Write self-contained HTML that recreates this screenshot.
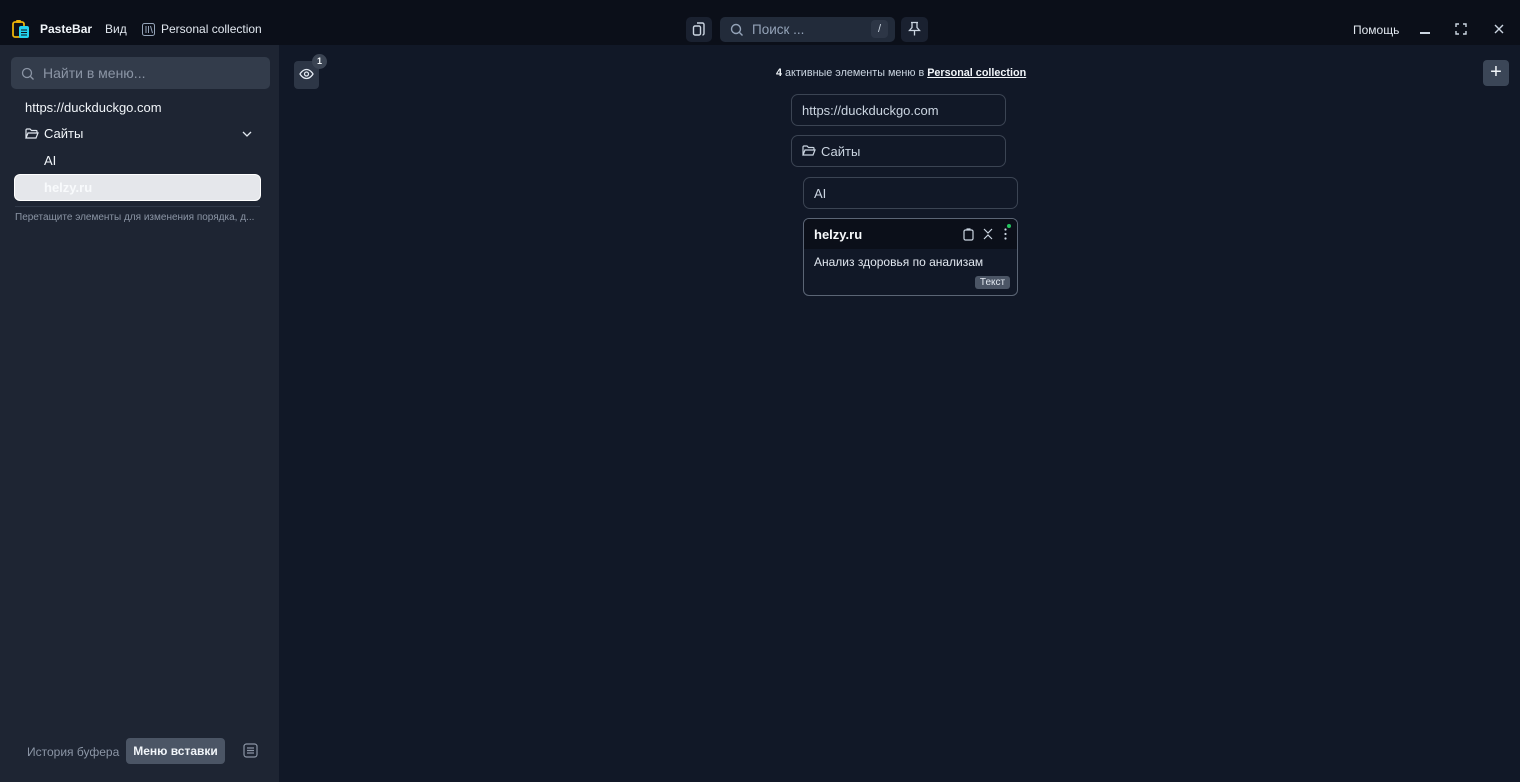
<!DOCTYPE html>
<html><head><meta charset="utf-8"><style>
*{box-sizing:border-box;margin:0;padding:0}
body{width:1520px;height:782px;background:#111827;font-family:"Liberation Sans","Noto Sans CJK SC",sans-serif;color:#e5e7eb;position:relative;overflow:hidden;font-size:13px}
.a{position:absolute}
.top{left:0;top:0;width:1520px;height:45px;background:#0b0f19}
.side{left:0;top:45px;width:279px;height:737px;background:#1e2533}
.box{border:1.5px solid #3b4453;border-radius:7px;background:#111827;color:#cbd5e1;font-size:13px;padding-left:10px;display:flex;align-items:center}
svg{display:block}
</style></head><body>
<div class="a top"></div>
<div class="a side"></div>
<svg class="a" style="left:12px;top:19px" width="18" height="20" viewBox="0 0 18 20"><rect x="1" y="3" width="11" height="15" rx="2" fill="none" stroke="#eab308" stroke-width="1.8"/><rect x="4" y="1" width="5" height="3" rx="1" fill="#eab308"/><rect x="7" y="7" width="10" height="12" rx="2" fill="#22d3ee"/><path d="M9 11h6M9 13.5h6M9 16h6" stroke="#0b0f19" stroke-width="1"/></svg>
<div class="a" style="left:40px;top:22px;font-weight:bold;font-size:12px;color:#f1f5f9">PasteBar</div>
<div class="a" style="left:105px;top:22px;font-size:12px;color:#e2e8f0">Вид</div>
<svg class="a" style="left:142px;top:23px" width="13" height="13"><rect x="0.5" y="0.5" width="12" height="12" rx="2" fill="none" stroke="#94a3b8"/><path d="M4 3v7M6.5 3v7M8.5 3l2 7" stroke="#94a3b8"/></svg>
<div class="a" style="left:161px;top:22px;font-size:12px;color:#e2e8f0">Personal collection</div>
<div class="a" style="left:686px;top:17px;width:26px;height:25px;background:#1a2130;border-radius:5px"></div>
<svg class="a" style="left:692px;top:21px" width="14" height="16"><rect x="1.5" y="5" width="7" height="9" rx="1.5" fill="none" stroke="#cbd5e1" stroke-width="1.4"/><path d="M5 2h5.5a1.5 1.5 0 0 1 1.5 1.5v9a1.5 1.5 0 0 1-1.5 1.5" fill="none" stroke="#cbd5e1" stroke-width="1.4"/></svg>
<div class="a" style="left:720px;top:17px;width:175px;height:25px;background:#222b3a;border-radius:5px"></div>
<svg class="a" style="left:730px;top:23px" width="14" height="14"><circle cx="6" cy="6" r="4.5" fill="none" stroke="#94a3b8" stroke-width="1.4"/><path d="M9.5 9.5l3 3" stroke="#94a3b8" stroke-width="1.4"/></svg>
<div class="a" style="left:752px;top:22px;font-size:13.5px;color:#94a3b8">Поиск ...</div>
<div class="a" style="left:871px;top:20px;width:17px;height:18px;background:#2d3646;border-radius:4px;color:#cbd5e1;font-size:11px;text-align:center;line-height:18px">/</div>
<div class="a" style="left:901px;top:17px;width:27px;height:25px;background:#1a2130;border-radius:5px"></div>
<svg class="a" style="left:908px;top:21px" width="13" height="16"><path d="M3 1.5h7M4 1.5v5L1.5 9.5h10L9 6.5v-5M6.5 9.5v5" fill="none" stroke="#cbd5e1" stroke-width="1.3"/></svg>
<div class="a" style="left:1353px;top:23px;font-size:12px;color:#e2e8f0">Помощь</div>
<div class="a" style="left:1420px;top:32px;width:10px;height:1.5px;background:#cbd5e1"></div>
<svg class="a" style="left:1455px;top:23px" width="12" height="12" fill="none" stroke="#cbd5e1" stroke-width="1.4"><path d="M1 4V1h3M8 1h3v3M11 8v3H8M4 11H1V8"/></svg>
<svg class="a" style="left:1494px;top:24px" width="10" height="10" stroke="#cbd5e1" stroke-width="1.4"><path d="M1 1l8 8M9 1l-8 8"/></svg>
<div class="a" style="left:11px;top:57px;width:259px;height:32px;background:#333c4b;border-radius:5px"></div>
<svg class="a" style="left:21px;top:67px" width="14" height="14"><circle cx="6" cy="6" r="4.5" fill="none" stroke="#8b95a5" stroke-width="1.3"/><path d="M9.5 9.5l3 3" stroke="#8b95a5" stroke-width="1.3"/></svg>
<div class="a" style="left:43px;top:65px;font-size:14px;color:#8b95a5">Найти в меню...</div>
<div class="a" style="left:25px;top:100px;font-size:13px;color:#f1f5f9">https://duckduckgo.com</div>
<svg class="a" style="left:25px;top:128px" width="14" height="12" fill="none" stroke="#e2e8f0" stroke-width="1.2"><path d="M1 10V2a1 1 0 0 1 1-1h3l1.5 1.5H11a1 1 0 0 1 1 1V5M1 10l2-5h10l-2 5z"/></svg>
<div class="a" style="left:44px;top:126px;font-size:13px;color:#f1f5f9">Сайты</div>
<svg class="a" style="left:242px;top:131px" width="10" height="7" fill="none" stroke="#e2e8f0" stroke-width="1.3"><path d="M1 1l4 4 4-4"/></svg>
<div class="a" style="left:44px;top:153px;font-size:13px;color:#f1f5f9">AI</div>
<div class="a" style="left:15px;top:175px;width:245px;height:25px;background:#e5e7eb;border-radius:5px;box-shadow:0 0 0 1px #fff"></div>
<div class="a" style="left:44px;top:180px;font-size:13px;color:#f8fafc;font-weight:bold">helzy.ru</div>
<div class="a" style="left:15px;top:206px;width:245px;height:1px;background:#2f3848"></div>
<div class="a" style="left:15px;top:212px;font-size:10px;color:#8b95a5">Перетащите элементы для изменения порядка, д...</div>
<div class="a" style="left:27px;top:745px;font-size:12px;color:#8b95a5">История буфера</div>
<div class="a" style="left:126px;top:738px;width:99px;height:26px;background:#4b5565;border-radius:4px;color:#f1f5f9;font-size:12px;font-weight:bold;text-align:center;line-height:26px">Меню вставки</div>
<svg class="a" style="left:243px;top:743px" width="15" height="15" fill="none" stroke="#8b95a5" stroke-width="1.2"><rect x="1" y="1" width="13" height="13" rx="2.5"/><path d="M4 5h7M4 7.5h7M4 10h7"/></svg>
<div class="a" style="left:294px;top:61px;width:25px;height:28px;background:#2d3646;border-radius:4px"></div>
<svg class="a" style="left:299px;top:68px" width="15" height="12" fill="none" stroke="#e2e8f0" stroke-width="1.3"><path d="M1 6s2.5-4.5 6.5-4.5S14 6 14 6s-2.5 4.5-6.5 4.5S1 6 1 6z"/><circle cx="7.5" cy="6" r="2"/></svg>
<div class="a" style="left:312px;top:54px;width:15px;height:15px;background:#3b4453;border-radius:50%;font-size:9px;font-weight:bold;color:#f1f5f9;text-align:center;line-height:15px">1</div>
<div class="a" style="left:776px;top:67px;font-size:10.8px;color:#cbd5e1"><b style="color:#f1f5f9">4</b> активные элементы меню в <b style="text-decoration:underline;color:#f1f5f9">Personal collection</b></div>
<div class="a" style="left:1483px;top:60px;width:26px;height:26px;background:#3b4657;border-radius:4px;color:#f1f5f9;font-size:20px;text-align:center;line-height:25px">+</div>
<div class="a box" style="left:791px;top:94px;width:215px;height:32px">https://duckduckgo.com</div>
<div class="a box" style="left:791px;top:135px;width:215px;height:32px"><svg width="14" height="12" style="margin-right:5px" fill="none" stroke="#cbd5e1" stroke-width="1.2"><path d="M1 10V2a1 1 0 0 1 1-1h3l1.5 1.5H11a1 1 0 0 1 1 1V5M1 10l2-5h10l-2 5z"/></svg>Сайты</div>
<div class="a box" style="left:803px;top:177px;width:215px;height:32px">AI</div>
<div class="a" style="left:803px;top:218px;width:215px;height:78px;border:1.5px solid #5b6575;border-radius:6px;background:#111827;overflow:hidden">
<div style="height:30px;background:#0b0f19;position:relative"><b style="position:absolute;left:10px;top:8px;font-size:13px;color:#f8fafc">helzy.ru</b>
<svg style="position:absolute;left:159px;top:9px" width="11" height="13" fill="none" stroke="#cbd5e1" stroke-width="1.2"><rect x="1" y="2" width="9" height="10" rx="1.5"/><path d="M3.5 1h4"/></svg>
<svg style="position:absolute;left:179px;top:9px" width="10" height="12" fill="none" stroke="#cbd5e1" stroke-width="1.2"><path d="M1 1l4 4 4-4M1 11l4-4 4 4"/></svg>
<svg style="position:absolute;left:200px;top:9px" width="3" height="12" fill="#cbd5e1"><circle cx="1.5" cy="1.5" r="1.1"/><circle cx="1.5" cy="6" r="1.1"/><circle cx="1.5" cy="10.5" r="1.1"/></svg>
<div style="position:absolute;left:203px;top:5px;width:4px;height:4px;border-radius:50%;background:#22c55e"></div></div>
<div style="position:absolute;left:10px;top:36px;font-size:12px;color:#e2e8f0">Анализ здоровья по анализам</div>
<div style="position:absolute;left:171px;top:57px;width:35px;height:13px;background:#4b5565;border-radius:3px;font-size:10px;color:#e2e8f0;text-align:center;line-height:13px">Текст</div>
</div>
</body></html>
